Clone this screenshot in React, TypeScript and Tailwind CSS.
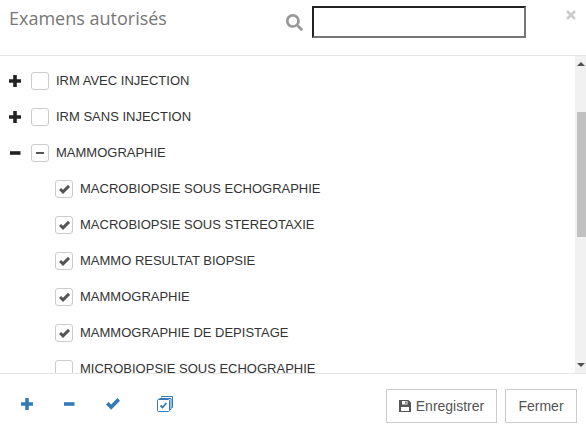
import { FaSearch } from 'react-icons/fa';

interface Item {
  label: string;
  state: 'none' | 'partial' | 'checked';
  toggle?: 'plus' | 'minus';
}

const ITEMS: Item[] = [
  { label: 'IRM AVEC INJECTION', state: 'none', toggle: 'plus' },
  { label: 'IRM SANS INJECTION', state: 'none', toggle: 'plus' },
  { label: 'MAMMOGRAPHIE', state: 'partial', toggle: 'minus' },
  { label: 'MACROBIOPSIE SOUS ECHOGRAPHIE', state: 'checked' },
  { label: 'MACROBIOPSIE SOUS STEREOTAXIE', state: 'checked' },
  { label: 'MAMMO RESULTAT BIOPSIE', state: 'checked' },
  { label: 'MAMMOGRAPHIE', state: 'checked' },
  { label: 'MAMMOGRAPHIE DE DEPISTAGE', state: 'checked' },
  { label: 'MICROBIOPSIE SOUS ECHOGRAPHIE', state: 'none' },
];

function PlusIcon() {
  return (
    <svg width="12" height="12" viewBox="0 0 12 12" fill="currentColor">
      <path d="M4.2 0h3.6v4.2H12v3.6H7.8V12H4.2V7.8H0V4.2h4.2z" />
    </svg>
  );
}

function MinusIcon() {
  return (
    <svg width="12" height="12" viewBox="0 0 12 12" fill="currentColor">
      <path d="M1 4.2h10.5v3.6H1z" />
    </svg>
  );
}

function CheckIcon({ size }: { size: number }) {
  return (
    <svg width={size} height={size} viewBox="0 0 13 13" fill="currentColor">
      <path d="M0 7l2.4-2.4 2.4 2.3L10.6 1 13 3.4 4.8 11.8z" />
    </svg>
  );
}

function SaveIcon() {
  return (
    <svg width="12" height="12" viewBox="0 0 12 12" fill="currentColor" fillRule="evenodd">
      <path d="M0 0h9.5L12 2.5V12H0zM3 1v3.5h5.5V1zM2 7v4h8V7z" />
      <path d="M6.2 1.5h1.4v2.3H6.2z" />
    </svg>
  );
}

function CheckAllIcon() {
  return (
    <svg width="16" height="16" viewBox="0 0 16 16" fill="none" stroke="#337ab7" strokeWidth="1">
      <path d="M4.5 1.5V0.5H15.5V11.5H14.5" />
      <path d="M2.5 3V2.5H14V13.5H13" />
      <rect x="0.5" y="3.5" width="12" height="12" rx="1" />
      <path d="M3.5 9.5l2 2 4-4.5" strokeWidth="1.8" />
    </svg>
  );
}

function Row({ item }: { item: Item }) {
  return (
    <div className={`h-9 shrink-0 flex items-center ${item.toggle ? 'pl-[9px]' : 'pl-[55px]'}`}>
      {item.toggle && (
        <span className="w-[22px] shrink-0 text-[#222]">
          {item.toggle === 'plus' ? <PlusIcon /> : <MinusIcon />}
        </span>
      )}
      <span className="w-[18px] h-[18px] shrink-0 border border-[#ccc] rounded-[3px] flex items-center justify-center text-[#555]">
        {item.state === 'checked' && <CheckIcon size={11} />}
        {item.state === 'partial' && <span className="w-2 h-0.5 bg-[#555]" />}
      </span>
      <span className="ml-[7px] -mt-px text-[13px] text-[#333] whitespace-nowrap">{item.label}</span>
    </div>
  );
}

export default function App() {
  return (
    <div className="w-[586px] h-[435px] bg-white flex flex-col overflow-hidden font-['Liberation_Sans',sans-serif]">
      <div className="h-[56px] shrink-0 border-b border-[#e5e5e5] flex items-start">
        <h2 className="ml-[9px] mt-[5px] text-[18px] leading-[26px] text-[#777] font-['Open_Sans',sans-serif]">
          Examens autorisés
        </h2>
        <FaSearch size={17} className="ml-auto mt-[14px] text-[#999]" />
        <input className="ml-[9px] mt-[6px] w-[214px] h-8 bg-white border-2 border-t-[#222] border-l-[#222] border-r-[#767676] border-b-[#767676]" />
        <svg width="10" height="10" viewBox="0 0 10 10" className="ml-10 mr-[10px] mt-[10px]" stroke="#ccc" strokeWidth="2.6">
          <path d="M1 1l8 8M9 1l-8 8" />
        </svg>
      </div>

      <div className="flex-1 min-h-0 flex">
        <div className="flex-1 min-w-0 pt-[7px] overflow-hidden flex flex-col">
          {ITEMS.map((item, i) => (
            <Row key={i} item={item} />
          ))}
        </div>
        <div className="w-[11px] shrink-0 bg-[#f1f1f1] flex flex-col items-end">
          <div className="h-[56px] w-full flex justify-center pt-[6px]">
            <span className="w-0 h-0 border-x-[4px] border-x-transparent border-b-[4px] border-b-[#505050]" />
          </div>
          <div className="w-[9px] h-[125px] bg-[#c1c1c1]" />
          <div className="flex-1 w-full flex justify-center items-end pb-[6px]">
            <span className="w-0 h-0 border-x-[4px] border-x-transparent border-t-[4px] border-t-[#505050]" />
          </div>
        </div>
      </div>

      <div className="h-[62px] shrink-0 border-t border-[#e5e5e5] flex items-start">
        <div className="flex items-center h-[60px] text-[#337ab7]">
          <span className="ml-[21px]">
            <PlusIcon />
          </span>
          <span className="ml-[30px]">
            <MinusIcon />
          </span>
          <span className="ml-[31px]">
            <CheckIcon size={14} />
          </span>
          <span className="ml-[37px]">
            <CheckAllIcon />
          </span>
        </div>
        <button className="ml-auto mt-[15px] w-[111px] h-[34px] border border-[#ccc] flex items-center justify-center gap-[5px] text-sm text-[#555]">
          <SaveIcon />
          Enregistrer
        </button>
        <button className="ml-2 mr-[9px] mt-[15px] w-[72px] h-[34px] border border-[#ccc] text-sm text-[#555]">
          Fermer
        </button>
      </div>
    </div>
  );
}
